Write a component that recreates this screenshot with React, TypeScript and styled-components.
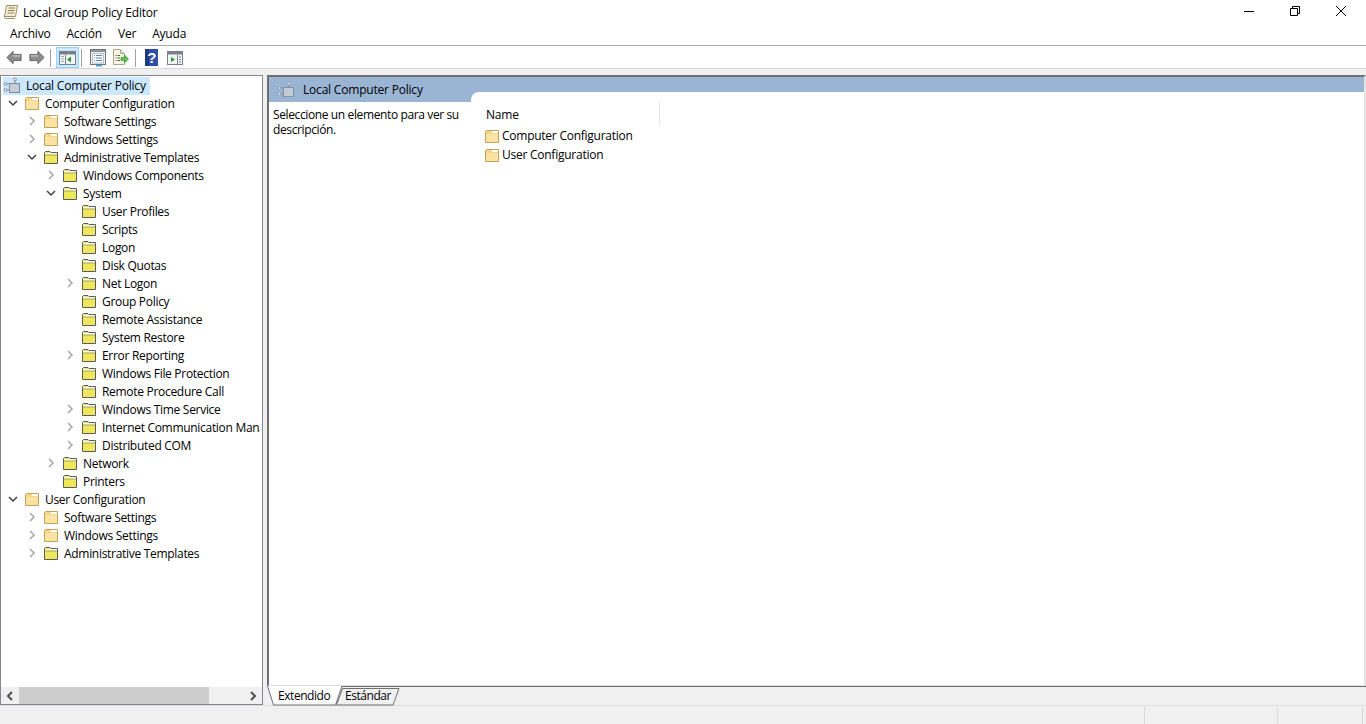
import React, { FC } from "react";
import styled, { createGlobalStyle } from "styled-components";

const GlobalStyle = createGlobalStyle`
  html, body {
    margin: 0;
    height: 100%;
    overflow: hidden;
    background: #f0f0f0;
  }
  body {
    font-family: "Open Sans", "Noto Sans", "Liberation Sans", sans-serif;
    font-size: 12px;
    letter-spacing: -0.2px;
    color: #000;
  }
`;

type FolderKind = "plain" | "policy";
type Expander = "open" | "closed" | "none";

interface TreeEntry {
  label: string;
  depth: number;
  expander: Expander;
  folder: FolderKind;
}

const TREE: TreeEntry[] = [
  { label: "Computer Configuration", depth: 0, expander: "open", folder: "plain" },
  { label: "Software Settings", depth: 1, expander: "closed", folder: "plain" },
  { label: "Windows Settings", depth: 1, expander: "closed", folder: "plain" },
  { label: "Administrative Templates", depth: 1, expander: "open", folder: "policy" },
  { label: "Windows Components", depth: 2, expander: "closed", folder: "policy" },
  { label: "System", depth: 2, expander: "open", folder: "policy" },
  { label: "User Profiles", depth: 3, expander: "none", folder: "policy" },
  { label: "Scripts", depth: 3, expander: "none", folder: "policy" },
  { label: "Logon", depth: 3, expander: "none", folder: "policy" },
  { label: "Disk Quotas", depth: 3, expander: "none", folder: "policy" },
  { label: "Net Logon", depth: 3, expander: "closed", folder: "policy" },
  { label: "Group Policy", depth: 3, expander: "none", folder: "policy" },
  { label: "Remote Assistance", depth: 3, expander: "none", folder: "policy" },
  { label: "System Restore", depth: 3, expander: "none", folder: "policy" },
  { label: "Error Reporting", depth: 3, expander: "closed", folder: "policy" },
  { label: "Windows File Protection", depth: 3, expander: "none", folder: "policy" },
  { label: "Remote Procedure Call", depth: 3, expander: "none", folder: "policy" },
  { label: "Windows Time Service", depth: 3, expander: "closed", folder: "policy" },
  { label: "Internet Communication Management", depth: 3, expander: "closed", folder: "policy" },
  { label: "Distributed COM", depth: 3, expander: "closed", folder: "policy" },
  { label: "Network", depth: 2, expander: "closed", folder: "policy" },
  { label: "Printers", depth: 2, expander: "none", folder: "policy" },
  { label: "User Configuration", depth: 0, expander: "open", folder: "plain" },
  { label: "Software Settings", depth: 1, expander: "closed", folder: "plain" },
  { label: "Windows Settings", depth: 1, expander: "closed", folder: "plain" },
  { label: "Administrative Templates", depth: 1, expander: "closed", folder: "policy" },
];

const FolderIcon: FC<{ kind: FolderKind }> = ({ kind }) =>
  kind === "plain" ? (
    <svg width="16" height="16" viewBox="0 0 16 16">
      <path d="M1.5 14.5V3.5L2.5 2.5H14.5V14.5Z" fill="#f4d58a" stroke="#c2a25a" />
      <path d="M8 3H14V5H8Z" fill="#fff" />
      <path d="M2 6H14V14H2Z" fill="#fae3a3" />
    </svg>
  ) : (
    <svg width="16" height="16" viewBox="0 0 16 16">
      <defs>
        <pattern id="dither" width="2" height="2" patternUnits="userSpaceOnUse">
          <rect width="2" height="2" fill="#fff000" />
          <rect width="1" height="1" fill="#e0e0b0" />
          <rect x="1" y="1" width="1" height="1" fill="#e0e0b0" />
        </pattern>
      </defs>
      <path d="M1.5 14.5V3.5L2.5 2.5H7L8 3.5H14.5V14.5Z" fill="url(#dither)" stroke="#5c5c5c" />
      <path d="M2 4H14V5.5H2Z" fill="#fff" />
      <path d="M2 6H14" stroke="#777" strokeWidth=".6" />
    </svg>
  );

const PolicyNodeIcon: FC<{ muted?: boolean }> = ({ muted }) => {
  const stroke = muted ? "#8094ae" : "#7c8ba0";
  return (
    <svg width="18" height="18" viewBox="0 0 18 18">
      <path d="M2 7H7M2 13H7M12 2V7" stroke={stroke} fill="none" />
      <circle cx="2.5" cy="7" r="1.5" fill="#dfe6ee" stroke={stroke} strokeWidth=".8" />
      <circle cx="2.5" cy="13" r="1.5" fill="#dfe6ee" stroke={stroke} strokeWidth=".8" />
      <circle cx="12" cy="2.5" r="1.5" fill="#dfe6ee" stroke={stroke} strokeWidth=".8" />
      <rect x="6.5" y="6.5" width="10" height="9" fill={muted ? "#c4cbd3" : "#c9ced4"} stroke={stroke} />
    </svg>
  );
};

const ChevronIcon: FC<{ open?: boolean; color: string }> = ({ open, color }) => (
  <svg width="10" height="10" viewBox="0 0 10 10">
    <path d={open ? "M1 3L5 7L9 3" : "M3 1L7 5L3 9"} fill="none" stroke={color} strokeWidth="1.5" />
  </svg>
);

const ArrowIcon: FC<{ flip?: boolean }> = ({ flip }) => (
  <svg width="16" height="15" viewBox="0 0 18 16">
    <path
      d={flip ? "M17 8L10 1V4.5H1V11.5H10V15Z" : "M1 8L8 1V4.5H17V11.5H8V15Z"}
      fill="#8d8d8d"
      stroke="#5f5f5f"
    />
    <path d={flip ? "M2 5.5H10V7H2Z" : "M8 5.5H16V7H8Z"} fill="#c4c4c4" />
  </svg>
);

const PaneToggleIcon: FC = () => (
  <svg width="17" height="16" viewBox="0 0 17 16">
    <rect x=".5" y="1.5" width="16" height="13" fill="#f4f5f6" stroke="#77808a" />
    <rect x="1" y="2" width="15" height="2.5" fill="#77808a" />
    <path d="M6.5 5V14" stroke="#77808a" />
    <path d="M8 9.5L12 6.5V12.5Z" fill="#1f9a3a" />
    <path d="M2 6.5H5M2 9H5M2 11.5H5" stroke="#8fa5bd" />
  </svg>
);

const PropertiesIcon: FC = () => (
  <svg width="16" height="18" viewBox="0 0 16 18">
    <rect x=".5" y=".5" width="15" height="15" fill="#eef0f2" stroke="#6f7780" />
    <rect x="1" y="1" width="14" height="2" fill="#8a929b" />
    <rect x="2.5" y="4.5" width="11" height="9.5" fill="#fff" stroke="#b9bec4" />
    <path d="M4 6.5H5M6 6.5H12M4 9H5M6 9H12M4 11.5H5M6 11.5H12" stroke="#5b87b5" />
    <rect x="6" y="16" width="6" height="1.5" fill="#35a7e0" />
  </svg>
);

const ExportIcon: FC = () => (
  <svg width="17" height="17" viewBox="0 0 17 17">
    <path d="M1.5 .5H8.5L12.5 4.5V15.5H1.5Z" fill="#fbf6df" stroke="#a9a68f" />
    <path d="M8.5 .5V4.5H12.5" fill="#e9e4c8" stroke="#a9a68f" />
    <path d="M3.5 6.5H4.5M5.5 6.5H8M3.5 9H4.5M5.5 9H8M3.5 11.5H4.5M5.5 11.5H8" stroke="#555" />
    <path d="M9 8.5H12.5V6L16.5 10L12.5 14V11.5H9Z" fill="#5fc24f" stroke="#2f9a3a" strokeWidth=".7" />
  </svg>
);

const HelpIcon: FC = () => (
  <svg width="13" height="17" viewBox="0 0 13 17">
    <rect width="13" height="17" fill="#2f4fa8" />
    <rect width="4" height="17" fill="#21377f" />
    <text
      x="6.8"
      y="14"
      fontFamily="Liberation Sans, sans-serif"
      fontWeight="700"
      fontSize="15"
      fill="#fff"
      textAnchor="middle"
    >
      ?
    </text>
  </svg>
);

const ActionPaneIcon: FC = () => (
  <svg width="16" height="14" viewBox="0 0 16 14">
    <rect x=".5" y=".5" width="15" height="13" fill="#f4f5f6" stroke="#77808a" />
    <rect x="1" y="1" width="14" height="2.5" fill="#77808a" />
    <path d="M10.5 4V13" stroke="#77808a" />
    <path d="M4 6L8 8.5L4 11Z" fill="#1f9a3a" />
    <path d="M12 6H14M12 8.5H14M12 11H14" stroke="#5b87b5" />
  </svg>
);

const AppIcon: FC = () => (
  <svg width="16" height="16" viewBox="0 0 16 16">
    <path d="M3.5 1.5H14.5L12.5 12.5H1.5Z" fill="#f3ecd0" stroke="#9c8f68" />
    <path d="M5.5 4H12M5 6.5H11.5M4.5 9H11" stroke="#8d8464" />
    <path d="M1.5 12.5C1 14.5 3 15 4 14.5H12" fill="none" stroke="#9c8f68" />
  </svg>
);

const WindowButtons: FC = () => (
  <WindowControls>
    <WindowButton>
      <svg width="10" height="10" viewBox="0 0 10 10">
        <path d="M0 5.5H10" stroke="#000" />
      </svg>
    </WindowButton>
    <WindowButton>
      <svg width="10" height="10" viewBox="0 0 10 10">
        <path d="M.5 2.5H7.5V9.5H.5Z M2.5 2.5V.5H9.5V7.5H7.5" fill="none" stroke="#000" />
      </svg>
    </WindowButton>
    <WindowButton>
      <svg width="10" height="10" viewBox="0 0 10 10">
        <path d="M0 0L10 10M10 0L0 10" stroke="#000" />
      </svg>
    </WindowButton>
  </WindowControls>
);

const App: FC = () => (
  <>
    <GlobalStyle />
    <Page>
      <TitleBar>
        <TitleIcon>
          <AppIcon />
        </TitleIcon>
        <TitleText>Local Group Policy Editor</TitleText>
        <WindowButtons />
      </TitleBar>
      <MenuBar>
        <MenuItem>Archivo</MenuItem>
        <MenuItem>Acción</MenuItem>
        <MenuItem>Ver</MenuItem>
        <MenuItem>Ayuda</MenuItem>
      </MenuBar>
      <Toolbar>
        <ToolButton>
          <ArrowIcon />
        </ToolButton>
        <ToolButton>
          <ArrowIcon flip />
        </ToolButton>
        <ToolSeparator $left={2} $right={5} />
        <ToolButton $active>
          <PaneToggleIcon />
        </ToolButton>
        <ToolSeparator $left={2} $right={4} />
        <ToolButton>
          <PropertiesIcon />
        </ToolButton>
        <ToolButton>
          <ExportIcon />
        </ToolButton>
        <ToolSeparator $left={3} $right={4} />
        <ToolButton>
          <HelpIcon />
        </ToolButton>
        <ToolButton>
          <ActionPaneIcon />
        </ToolButton>
      </Toolbar>
      <Workspace>
        <TreePane>
          <TreeScroll>
            <RootRow>
              <PolicyNodeIcon />
              <RootLabel>Local Computer Policy</RootLabel>
            </RootRow>
            {TREE.map((entry, index) => (
              <TreeRow key={index} $depth={entry.depth}>
                <ExpanderSlot>
                  {entry.expander === "open" && <ChevronIcon open color="#404040" />}
                  {entry.expander === "closed" && <ChevronIcon color="#a6a6a6" />}
                </ExpanderSlot>
                <FolderIcon kind={entry.folder} />
                <TreeLabel>{entry.label}</TreeLabel>
              </TreeRow>
            ))}
          </TreeScroll>
          <HScrollBar>
            <ScrollArrow>
              <svg width="8" height="10" viewBox="0 0 8 10">
                <path d="M6 1L2 5L6 9" fill="none" stroke="#505050" strokeWidth="2" />
              </svg>
            </ScrollArrow>
            <ScrollTrack>
              <ScrollThumb />
            </ScrollTrack>
            <ScrollArrow>
              <svg width="8" height="10" viewBox="0 0 8 10">
                <path d="M2 1L6 5L2 9" fill="none" stroke="#505050" strokeWidth="2" />
              </svg>
            </ScrollArrow>
          </HScrollBar>
        </TreePane>
        <DetailColumn>
          <DetailPane>
            <Banner>
              <PolicyNodeIcon muted />
              <BannerTitle>Local Computer Policy</BannerTitle>
            </Banner>
            <DetailBody>
              <Description>Seleccione un elemento para ver su descripción.</Description>
              <ListArea>
                <ListHeader>
                  <NameColumn>Name</NameColumn>
                </ListHeader>
                <ListRow>
                  <FolderIcon kind="plain" />
                  <span>Computer Configuration</span>
                </ListRow>
                <ListRow>
                  <FolderIcon kind="plain" />
                  <span>User Configuration</span>
                </ListRow>
              </ListArea>
            </DetailBody>
          </DetailPane>
          <TabStrip>
            <Tab $selected>
              <TabShape width="75" height="20" viewBox="0 0 75 20">
                <path d="M.5 0L6.5 19H68.5L75 0Z" fill="#fff" />
                <path d="M.5 0L6.5 19H68.5L75 0" fill="none" stroke="#707070" />
              </TabShape>
              <TabLabel>Extendido</TabLabel>
            </Tab>
            <Tab>
              <TabShape width="64" height="20" viewBox="0 0 64 20">
                <path d="M.5 19L6.5 2.5H63L57 19Z" fill="#f0f0f0" stroke="#707070" />
              </TabShape>
              <TabLabel>Estándar</TabLabel>
            </Tab>
          </TabStrip>
        </DetailColumn>
      </Workspace>
      <StatusBar>
        <StatusCell $width={133} />
        <StatusCell $width={85} />
        <StatusGrip />
      </StatusBar>
    </Page>
  </>
);

const Page = styled.div`
  width: 1366px;
  height: 724px;
  display: flex;
  flex-direction: column;
  overflow: hidden;
`;

const TitleBar = styled.div`
  height: 24px;
  flex: none;
  display: flex;
  align-items: center;
  background: #fff;
  padding: 0 2px 0 3px;
`;

const TitleIcon = styled.div`
  width: 20px;
  height: 16px;
`;

const TitleText = styled.div`
  flex: 1;
  white-space: nowrap;
`;

const WindowControls = styled.div`
  display: flex;
  align-self: flex-start;
`;

const WindowButton = styled.div`
  width: 46px;
  height: 21px;
  display: flex;
  align-items: center;
  justify-content: center;
`;

const MenuBar = styled.div`
  height: 22px;
  box-sizing: border-box;
  flex: none;
  display: flex;
  align-items: center;
  gap: 16px;
  padding: 0 0 2px 10px;
  background: #fff;
  border-bottom: 1px solid #a9a9a9;
`;

const MenuItem = styled.span`
  white-space: nowrap;
`;

const Toolbar = styled.div`
  height: 22px;
  flex: none;
  display: flex;
  align-items: flex-end;
  padding-left: 2px;
  background: #fff;
  border-bottom: 1px solid #d6d6d6;
`;

const ToolButton = styled.div<{ $active?: boolean }>`
  width: 23px;
  height: 21px;
  box-sizing: border-box;
  display: flex;
  align-items: center;
  justify-content: center;
  background: ${(p) => (p.$active ? "#cce8ff" : "transparent")};
  border: 1px solid ${(p) => (p.$active ? "#99d1ff" : "transparent")};
`;

const ToolSeparator = styled.div<{ $left: number; $right: number }>`
  width: 1px;
  height: 18px;
  align-self: center;
  margin: 1px ${(p) => p.$right}px 0 ${(p) => p.$left}px;
  background: #a0a0a0;
`;

const Workspace = styled.div`
  flex: 1;
  min-height: 0;
  display: flex;
  gap: 4px;
  padding-top: 6px;
  background: #f0f0f0;
  border-bottom: 1px solid #dcdcdc;
`;

const TreePane = styled.div`
  width: 263px;
  flex: none;
  box-sizing: border-box;
  display: flex;
  flex-direction: column;
  background: #fff;
  border: 1px solid #828790;
`;

const TreeScroll = styled.div`
  flex: 1;
  min-height: 0;
  overflow: hidden;
  padding-top: 1px;
  margin-right: 2px;
`;

const RootRow = styled.div`
  width: 147px;
  height: 18px;
  box-sizing: border-box;
  margin-left: 2px;
  padding-bottom: 1px;
  display: flex;
  align-items: center;
  background: #cce8ff;
  white-space: nowrap;
`;

const RootLabel = styled.span`
  margin-left: 5px;
`;

const TreeRow = styled.div<{ $depth: number }>`
  height: 18px;
  box-sizing: border-box;
  display: flex;
  align-items: center;
  padding-left: ${(p) => 4 + p.$depth * 19}px;
  padding-bottom: 2px;
  white-space: nowrap;
  letter-spacing: -0.3px;

  & > svg {
    flex: none;
    margin-left: 3px;
  }
`;

const ExpanderSlot = styled.div`
  width: 16px;
  height: 16px;
  flex: none;
  display: flex;
  align-items: center;
  justify-content: center;
`;

const TreeLabel = styled.span`
  margin-left: 5px;
`;

const HScrollBar = styled.div`
  height: 17px;
  flex: none;
  display: flex;
  background: #f0f0f0;
`;

const ScrollArrow = styled.div`
  width: 18px;
  flex: none;
  display: flex;
  align-items: center;
  justify-content: center;
`;

const ScrollTrack = styled.div`
  flex: 1;
  display: flex;
`;

const ScrollThumb = styled.div`
  width: 190px;
  background: #cdcdcd;
`;

const DetailColumn = styled.div`
  flex: 1;
  min-width: 0;
  display: flex;
  flex-direction: column;
`;

const DetailPane = styled.div`
  flex: 1;
  min-height: 0;
  background: #fff;
  border-top: 2px solid #6f6f6f;
  border-left: 2px solid #6f6f6f;
  border-right: 2px solid #e4e4e4;
  border-bottom: 1px solid #dcdcdc;
`;

const Banner = styled.div`
  height: 25px;
  display: flex;
  align-items: center;
  padding: 0 0 0 8px;
  background: #9ab4d3;
  box-sizing: border-box;
`;

const BannerTitle = styled.span`
  margin-left: 8px;
  padding-bottom: 1px;
`;

const DetailBody = styled.div`
  display: grid;
  grid-template-columns: 202px 1fr;
`;

const Description = styled.div`
  padding: 5px 0 0 4px;
  line-height: 15px;
  letter-spacing: -0.38px;
`;

const ListArea = styled.div`
  margin-top: -10px;
  padding: 10px 0 0 14px;
  background: #fff;
  border-top-left-radius: 8px;
`;

const ListHeader = styled.div`
  height: 24px;
  width: 175px;
  box-sizing: border-box;
  display: flex;
  align-items: center;
  border-right: 1px solid #e5e5e5;
`;

const NameColumn = styled.span`
  padding-left: 1px;
`;

const ListRow = styled.div`
  height: 19px;
  margin-left: -1px;
  display: flex;
  align-items: center;
  gap: 2px;
  white-space: nowrap;
  letter-spacing: -0.25px;
`;

const TabStrip = styled.div`
  height: 19px;
  flex: none;
  display: flex;
  box-sizing: border-box;
  border-top: 1px solid #6f6f6f;
`;

const Tab = styled.div<{ $selected?: boolean }>`
  position: relative;
  height: 20px;
  margin-top: -1px;
  box-sizing: border-box;
  width: ${(p) => (p.$selected ? 75 : 64)}px;
  margin-left: ${(p) => (p.$selected ? 0 : -6)}px;
  padding-left: ${(p) => (p.$selected ? 11 : 9)}px;
  z-index: ${(p) => (p.$selected ? 2 : 1)};
  line-height: 20px;
  letter-spacing: -0.45px;
`;

const TabShape = styled.svg`
  position: absolute;
  left: 0;
  top: 0;
`;

const TabLabel = styled.span`
  position: relative;
`;

const StatusBar = styled.div`
  height: 18px;
  flex: none;
  display: flex;
  justify-content: flex-end;
  background: #f0f0f0;
`;

const StatusCell = styled.div<{ $width: number }>`
  width: ${(p) => p.$width}px;
  box-sizing: border-box;
  margin-top: 1px;
  border-left: 1px solid #d9d9d9;
`;

const StatusGrip = styled.div`
  width: 3px;
  margin-top: 1px;
  border-left: 1px solid #d9d9d9;
`;

export default App;
